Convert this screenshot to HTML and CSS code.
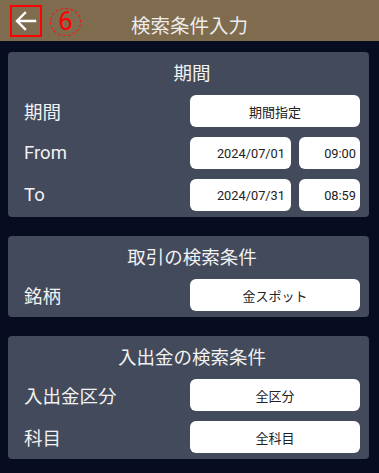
FILE: index.html
```html
<!DOCTYPE html>
<html lang="ja">
<head>
<meta charset="utf-8">
<link rel="stylesheet" href="styles.css">
</head>
<body>
<header class="topbar">
  <span class="back-box">
    <svg class="back-icon" width="22" height="20" viewBox="0 0 22 20">
      <path d="M20 10H2.5M10 2L2 10l8 8" fill="none" stroke="#fff" stroke-width="2.4" stroke-linecap="square"/>
    </svg>
  </span>
  <span class="step-mark">6</span>
  <h1 class="title">検索条件入力</h1>
</header>
<main class="content">
  <section class="card">
    <h2 class="card-title">期間</h2>
    <div class="row">
      <span class="label">期間</span>
      <span class="field">期間指定</span>
    </div>
    <div class="row">
      <span class="label">From</span>
      <span class="pair"><span class="field date">2024/07/01</span><span class="field time">09:00</span></span>
    </div>
    <div class="row">
      <span class="label">To</span>
      <span class="pair"><span class="field date">2024/07/31</span><span class="field time">08:59</span></span>
    </div>
  </section>
  <section class="card">
    <h2 class="card-title">取引の検索条件</h2>
    <div class="row">
      <span class="label">銘柄</span>
      <span class="field">金スポット</span>
    </div>
  </section>
  <section class="card">
    <h2 class="card-title">入出金の検索条件</h2>
    <div class="row">
      <span class="label">入出金区分</span>
      <span class="field">全区分</span>
    </div>
    <div class="row">
      <span class="label">科目</span>
      <span class="field">全科目</span>
    </div>
  </section>
</main>
</body>
</html>
```
FILE: styles.css
```css
* { box-sizing: border-box; }
html, body {
  margin: 0;
  padding: 0;
}
body {
  width: 379px;
  height: 473px;
  overflow: hidden;
  background: #080c20;
  font-family: Roboto, "Noto Sans CJK JP", sans-serif;
  color: #f0f0f0;
}
.topbar {
  position: relative;
  height: 41px;
  background: #7f6b4d;
  display: flex;
  align-items: center;
  justify-content: center;
}
.back-box {
  position: absolute;
  left: 10px;
  top: 5px;
  width: 32px;
  height: 32px;
  border: 2px solid #ff0000;
  display: flex;
  align-items: center;
  justify-content: center;
}
.step-mark {
  position: absolute;
  left: 50px;
  top: 8px;
  width: 31px;
  height: 28px;
  border: 1.5px dashed #ff1010;
  border-radius: 50%;
  color: #ff0000;
  font-family: Roboto, sans-serif;
  font-size: 26px;
  line-height: 25px;
  text-align: center;
}
.title {
  margin: 0;
  padding-top: 7px;
  font-size: 19.5px;
  font-weight: 400;
  color: #ececec;
  font-family: "Noto Sans CJK JP", sans-serif;
}
.content {
  display: flex;
  flex-direction: column;
  gap: 19px;
  padding: 11px 10px 0 8px;
}
.card {
  background: #424a5b;
  border-radius: 4px;
  padding: 9px 9px 6px 16px;
  display: flex;
  flex-direction: column;
  gap: 10px;
}
.card-title {
  margin: 0 0 -2px;
  font-size: 18.5px;
  font-weight: 400;
  line-height: 26px;
  text-align: center;
  color: #f2f2f2;
}
.row {
  display: flex;
  align-items: center;
  justify-content: space-between;
  height: 32px;
}
.label {
  font-size: 18.5px;
  color: #f2f2f2;
}
.pair {
  display: flex;
  gap: 8px;
}
.field {
  width: 170px;
  height: 32px;
  background: #ffffff;
  border-radius: 6px;
  color: #222;
  font-size: 13px;
  display: flex;
  align-items: center;
  justify-content: center;
}
.field.date {
  width: 101px;
  justify-content: flex-end;
  padding-right: 6px;
  font-size: 12.8px;
}
.field.time {
  width: 61px;
  justify-content: flex-end;
  padding-right: 4px;
  font-size: 12.8px;
}
```
